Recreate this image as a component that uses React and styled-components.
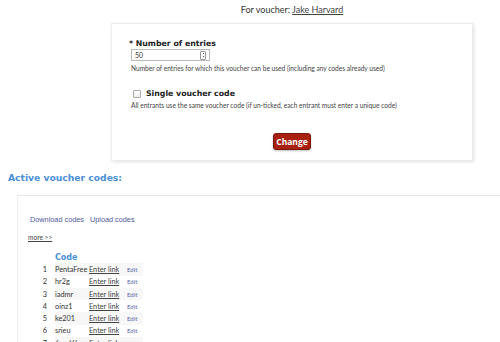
import React from "react";
import styled, { createGlobalStyle } from "styled-components";

const GlobalStyle = createGlobalStyle`
  html, body {
    margin: 0;
    padding: 0;
    background: #fff;
    overflow: hidden;
  }
  body {
    font-family: Lato, "Open Sans", sans-serif;
    color: #333;
  }
`;

const Page = styled.div`
  width: 500px;
  height: 342px;
  overflow: hidden;
`;

const FormColumn = styled.div`
  margin-left: 111px;
  width: 362px;
`;

const Caption = styled.div`
  text-align: center;
  font-size: 9px;
  color: #333;
  padding-top: 4px;
  height: 19px;

  a {
    color: #444;
    text-decoration: underline;
  }
`;

const FormBox = styled.div`
  border: 1px solid #ececec;
  box-shadow: 1px 1px 3px rgba(0, 0, 0, 0.12);
  padding: 15px 17px 10px 17px;
  height: 111px;
`;

const Field = styled.div`
  display: flex;
  flex-direction: column;
  align-items: flex-start;
  margin-bottom: ${(p) => p.gap || 0}px;
`;

const Label = styled.div`
  font-family: "DejaVu Sans", sans-serif;
  font-weight: bold;
  font-size: 7.8px;
  color: #222;
  display: flex;
  align-items: center;
  gap: 5px;
  padding-left: ${(p) => p.indent || 0}px;
`;

const NumberBox = styled.div`
  margin-left: 2px;
  margin-top: 1px;
  width: 71px;
  height: 10px;
  border: 1px solid #bbb;
  display: flex;
  align-items: center;
  justify-content: space-between;
  font-size: 7px;
  padding: 0 3px;
  color: #333;
`;

const Spinner = styled.span`
  width: 4px;
  height: 7px;
  border: 1px solid #999;
  border-radius: 1px;
  display: flex;
  flex-direction: column;
  justify-content: space-around;
  align-items: center;

  &::before,
  &::after {
    content: "";
    width: 1px;
    height: 1px;
    background: #555;
  }
`;

const Help = styled.div`
  font-size: 6.6px;
  color: #444;
  margin-top: 3px;
  padding-left: 2px;
`;

const Check = styled.span`
  width: 6px;
  height: 6px;
  border: 1px solid #aaa;
  border-radius: 1px;
  background: linear-gradient(#fff, #eee);
`;

const ButtonRow = styled.div`
  display: flex;
  justify-content: center;
  margin-top: 24px;
`;

const ChangeButton = styled.button`
  background: #a8200f;
  border: 1px solid #7d160a;
  border-radius: 3px;
  color: #fff;
  font-family: "Open Sans", sans-serif;
  font-weight: bold;
  font-size: 8.5px;
  height: 17px;
  width: 38px;
  padding: 0;
  box-shadow: 0 1px 2px rgba(0, 0, 0, 0.25);
`;

const SectionTitle = styled.h2`
  margin: 0;
  padding: 11px 0 0 8px;
  height: 23px;
  box-sizing: content-box;
  font-family: "DejaVu Sans", sans-serif;
  font-weight: bold;
  font-size: 9.2px;
  color: #4a8fd8;
`;

const CodesBox = styled.div`
  margin-left: 17px;
  border-top: 1px solid #e8e8e8;
  border-left: 1px solid #f0f0f0;
  box-shadow: 0 2px 0 #f6f6f6;
  padding: 19px 0 0 10px;
`;

const LinkBar = styled.div`
  display: flex;
  gap: 6px;
  padding-left: 2px;
  font-family: "Liberation Sans", Arial, sans-serif;
  font-size: 7.3px;
  color: #505a96;
`;

const More = styled.div`
  margin-top: 9px;
  font-size: 6.6px;
  color: #444;
  text-decoration: underline;
`;

const Table = styled.table`
  margin-top: 10px;
  margin-left: 5px;
  border-collapse: collapse;
  font-size: 7.3px;
  color: #333;

  td,
  th {
    padding: 0;
    height: 12.3px;
    white-space: nowrap;
  }
`;

const HeadCell = styled.th`
  text-align: left;
  font-family: "DejaVu Sans", sans-serif;
  font-size: 8px;
  color: #4a8fd8;
`;

const Row = styled.tr`
  background: ${(p) => (p.odd ? "#f7f7f7" : "transparent")};
`;

const Num = styled.td`
  text-align: right;
  padding-right: 8px !important;
  width: 14px;
  background: #fff;
`;

const CodeCell = styled.td`
  width: 34px;
`;

const EnterLink = styled.td`
  width: 38px;
  color: #444;
  text-decoration: underline;
`;

const EditLink = styled.td`
  font-size: 6px;
  color: #5a64a8;
  padding-right: 6px !important;
`;

const codes = ["PentaFree", "hr2g", "iadmr", "oinz1", "ke201", "srieu", "6pyd6b"];

export default function App() {
  return (
    <Page>
      <GlobalStyle />
      <FormColumn>
        <Caption>
          For voucher: <a>Jake Harvard</a>
        </Caption>
        <FormBox>
          <Field gap={17}>
            <Label>* Number of entries</Label>
            <NumberBox>
              <span>50</span>
              <Spinner />
            </NumberBox>
            <Help>
              Number of entries for which this voucher can be used (including
              any codes already used)
            </Help>
          </Field>
          <Field>
            <Label indent={4}>
              <Check />
              Single voucher code
            </Label>
            <Help>
              All entrants use the same voucher code (if un-ticked, each entrant
              must enter a unique code)
            </Help>
          </Field>
          <ButtonRow>
            <ChangeButton>Change</ChangeButton>
          </ButtonRow>
        </FormBox>
      </FormColumn>
      <SectionTitle>Active voucher codes:</SectionTitle>
      <CodesBox>
        <LinkBar>
          <span>Download codes</span>
          <span>Upload codes</span>
        </LinkBar>
        <More>more &gt;&gt;</More>
        <Table>
          <thead>
            <tr>
              <th />
              <HeadCell colSpan={3}>Code</HeadCell>
            </tr>
          </thead>
          <tbody>
            {codes.map((c, i) => (
              <Row key={c} odd={i % 2 === 0}>
                <Num>{i + 1}</Num>
                <CodeCell>{c}</CodeCell>
                <EnterLink>Enter link</EnterLink>
                <EditLink>Edit</EditLink>
              </Row>
            ))}
          </tbody>
        </Table>
      </CodesBox>
    </Page>
  );
}
